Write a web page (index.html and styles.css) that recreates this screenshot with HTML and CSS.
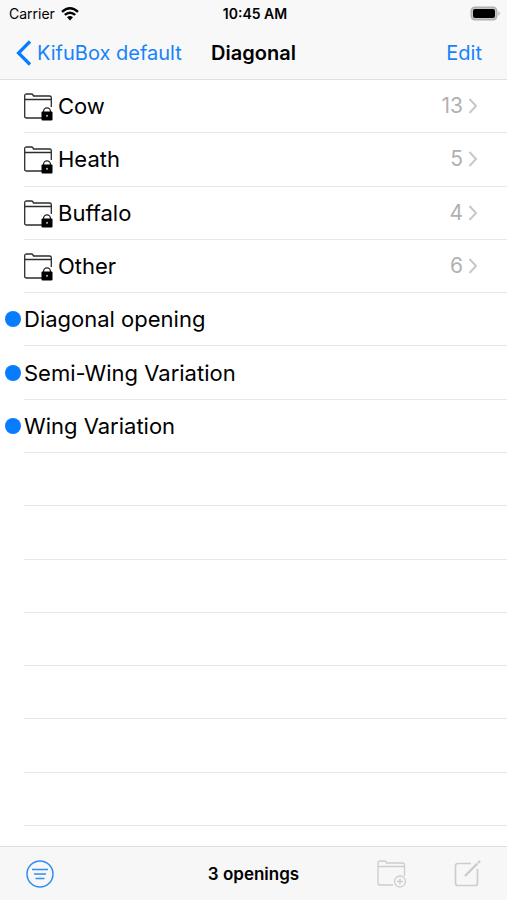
FILE: index.html
```html
<!DOCTYPE html>
<html lang="en">
<head>
<meta charset="utf-8">
<meta name="viewport" content="width=device-width, initial-scale=1">
<title>Diagonal</title>
<link rel="stylesheet" href="styles.css">
</head>
<body>
<svg class="defs" aria-hidden="true">
  <symbol id="locked-folder" viewBox="0 0 30 28">
    <path d="M18 25H2.500Q.7 25 .7 23.500V2.500Q.7 1 2.500 1H7.500Q9 1 9.500 3H25.500Q27.300 3 27.300 4.500V14M1 6.500H27.300" fill="none" stroke="#2c2c2c" stroke-width="1.300"/>
    <path d="M19.500 20V18.500a3.500 3.700 0 0 1 7 0V20" fill="none" stroke="#222" stroke-width="1.300"/>
    <rect x="17.500" y="18.500" width="11" height="9" rx="1"/>
    <circle cx="23" cy="22.800" r="1.100" fill="#aaa"/>
  </symbol>
  <symbol id="chevron" viewBox="0 0 10 18">
    <path d="M1.500 2L8 9L1.500 16" fill="none" stroke="#c8c8cb" stroke-width="2"/>
  </symbol>
</svg>
<header class="top">
  <div class="status">
    <span class="carrier">Carrier
      <svg width="18" height="14" viewBox="0 0 18 14" aria-hidden="true">
        <path d="M1 4.800Q9-2.200 17 4.800M3.800 7.900Q9 3.400 14.200 7.900" fill="none" stroke="#000" stroke-width="2.400"/>
        <path d="M6 10.300Q9 7.700 12 10.300L9 13.500Z"/>
      </svg>
    </span>
    <time class="clock">10:45 AM</time>
    <svg class="battery" width="31" height="15" viewBox="0 0 31 15" aria-hidden="true">
      <rect x=".5" y=".5" width="27" height="14" rx="4.500" fill="#b0b0b0"/>
      <path d="M28.500 5Q31 7.500 28.500 10Z" fill="#a8a8a8"/>
      <rect x="2" y="2" width="24" height="11" rx="3" fill="#c8c8c8"/>
      <rect x="3" y="3" width="22" height="9" rx="2"/>
    </svg>
  </div>
  <nav class="bar">
    <a class="back" href="#">
      <svg width="16" height="26" viewBox="0 0 16 26" aria-hidden="true"><path d="M14 1.500L2.500 13L14 24.500" fill="none" stroke="currentColor" stroke-width="3.200"/></svg>
      KifuBox default</a>
    <h1>Diagonal</h1>
    <button class="edit" type="button">Edit</button>
  </nav>
</header>
<main>
  <ul class="list">
    <li><a class="row" href="#"><svg class="folder"><use href="#locked-folder"/></svg><span class="name">Cow</span><span class="count">13</span><svg class="chevron"><use href="#chevron"/></svg></a></li>
    <li><a class="row" href="#"><svg class="folder"><use href="#locked-folder"/></svg><span class="name">Heath</span><span class="count">5</span><svg class="chevron"><use href="#chevron"/></svg></a></li>
    <li><a class="row" href="#"><svg class="folder"><use href="#locked-folder"/></svg><span class="name">Buffalo</span><span class="count">4</span><svg class="chevron"><use href="#chevron"/></svg></a></li>
    <li><a class="row" href="#"><svg class="folder"><use href="#locked-folder"/></svg><span class="name">Other</span><span class="count">6</span><svg class="chevron"><use href="#chevron"/></svg></a></li>
    <li><a class="row opening" href="#"><span class="dot"></span><span class="name">Diagonal opening</span></a></li>
    <li><a class="row opening" href="#"><span class="dot"></span><span class="name">Semi-Wing Variation</span></a></li>
    <li><a class="row opening" href="#"><span class="dot"></span><span class="name">Wing Variation</span></a></li>
    <li></li><li></li><li></li><li></li><li></li><li></li><li></li>
  </ul>
</main>
<footer class="toolbar">
  <button class="filter" type="button" aria-label="Filter">
    <svg width="28" height="28" viewBox="0 0 28 28" aria-hidden="true"><circle cx="14" cy="14" r="13" fill="none" stroke="currentColor" stroke-width="1.500"/><path d="M6 9.500H22M8 14H20M9.500 18.500H18.500" stroke="currentColor" stroke-width="1.500"/></svg>
  </button>
  <span class="total">3 openings</span>
  <div class="actions">
    <button type="button" aria-label="New folder" disabled>
      <svg width="30" height="28" viewBox="0 0 30 28" aria-hidden="true"><path d="M16 25H2.500Q1 25 1 23.500V2.500Q1 1 2.500 1H8Q9 1 9.500 3H26Q27.500 3 27.500 4.500V16M1 6.500H27.500" fill="none" stroke="currentColor" stroke-width="1.300"/><circle cx="23" cy="21.500" r="5.500" fill="none" stroke="currentColor" stroke-width="1.300"/><path d="M20 21.500H26M23 18.500V24.500" stroke="currentColor" stroke-width="1.300"/></svg>
    </button>
    <button type="button" aria-label="New opening" disabled>
      <svg width="27" height="28" viewBox="0 0 27 28" aria-hidden="true"><path d="M17 3.500H4Q1.500 3.500 1.500 6V23Q1.500 25.500 4 25.500H21Q23.500 25.500 23.500 23V9" fill="none" stroke="currentColor" stroke-width="1.700"/><path d="M11 16L23.300 3.700M24 3L26 1" stroke="currentColor" stroke-width="2.400"/></svg>
    </button>
  </div>
</footer>
</body>
</html>
```
FILE: styles.css
```css
* { box-sizing: border-box; }

body {
  display: flex;
  flex-direction: column;
  min-height: 100vh;
  margin: 0;
  background: #fff;
  color: #000;
  font-family: Inter, "Liberation Sans", sans-serif;
  font-size: 22px;
}

a { color: inherit; text-decoration: none; }
svg { display: block; flex: none; }
.defs { position: absolute; width: 0; height: 0; }

button {
  padding: 0;
  border: 0;
  background: none;
  color: #1683fb;
  font: inherit;
}

.top {
  border-bottom: 1px solid #e0e0e0;
  background: #f8f8f8;
}

.status,
.bar,
.toolbar {
  display: grid;
  grid-template-columns: minmax(0, 1fr) auto minmax(0, 1fr);
  align-items: center;
}

.status {
  height: 27px;
  padding: 0 6px 0 9px;
  font-size: 14px;
}

.carrier { display: flex; align-items: center; gap: 6px; }
.clock { font-weight: 600; }
.battery { justify-self: end; }

.bar {
  height: 52px;
  padding: 0 25px;
  font-size: 20px;
  line-height: 28px;
}

.bar h1 { margin: 0; font-size: 20px; font-weight: 600; }
.back { display: flex; align-items: center; gap: 5px; margin-left: -9px; color: #1683fb; white-space: nowrap; }
.back svg { color: #087cff; }
.edit { justify-self: end; }

main { display: flex; flex: 1; }

.list {
  display: grid;
  flex: 1;
  grid-template-rows: repeat(14, 8fr) 3fr;
  margin: 0;
  padding: 0 0 0 24px;
  list-style: none;
}

.list li { display: flex; border-bottom: 1px solid #e8e8ea; }

.row {
  display: flex;
  flex: 1;
  align-items: center;
  padding-right: 29px;
  line-height: 28px;
}

.opening { margin-left: -19px; }
.folder { width: 30px; height: 28px; margin: 2px 4px 0 0; }
.name { flex: 1; }
.count { margin-right: 5px; color: #b0b0b3; font-size: 21px; }
.chevron { width: 10px; height: 18px; }
.dot { width: 16px; height: 16px; margin-right: 3px; border-radius: 50%; background: #087cff; }

.toolbar {
  height: 54px;
  padding: 0 26px;
  border-top: 1px solid #dedede;
  background: #f7f7f7;
}

.filter { justify-self: start; color: #2f8df5; }
.total { font-size: 17px; font-weight: 600; }
.actions { display: flex; justify-content: flex-end; gap: 47px; }
.actions button { color: #cdcdcd; }
```
